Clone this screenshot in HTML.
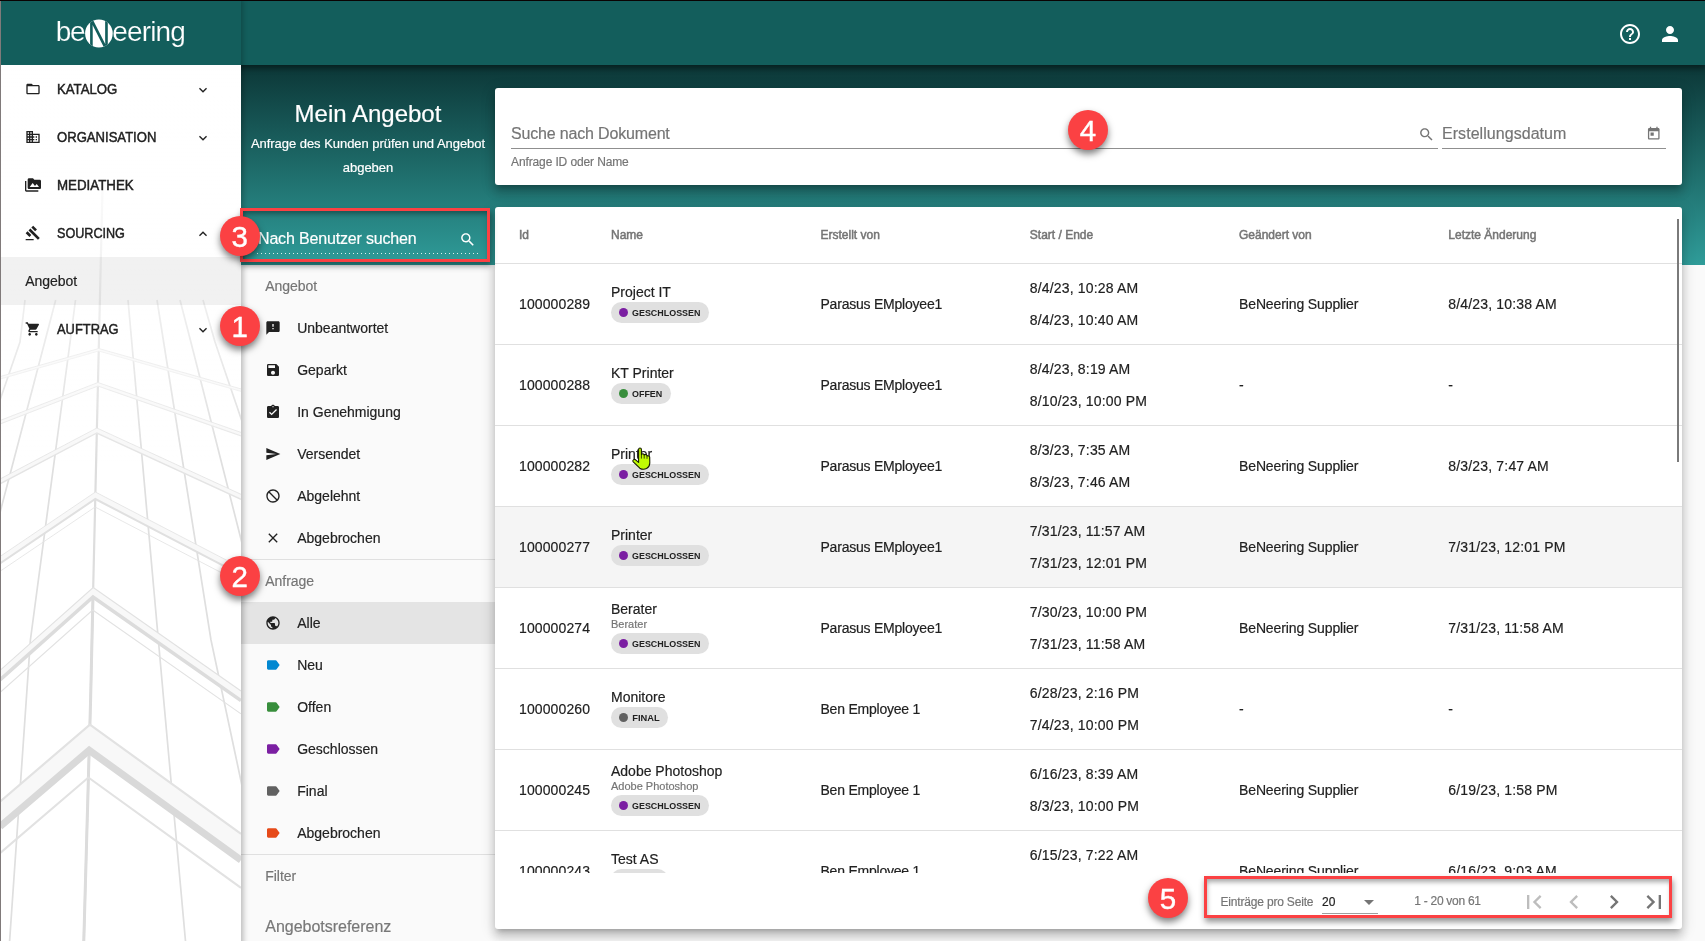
<!DOCTYPE html>
<html lang="de"><head><meta charset="utf-8"><title>Mein Angebot</title>
<style>
*{box-sizing:border-box}
html,body{margin:0;padding:0}
body{width:1705px;height:941px;overflow:hidden;position:relative;background:#fafafa;font-family:"Liberation Sans",sans-serif;color:#212121}
#root{position:absolute;left:0;top:0;width:1705px;height:941px;overflow:hidden;will-change:transform}
.t{position:absolute;white-space:nowrap;-webkit-text-stroke:.18px currentColor}
.ic{position:absolute;display:block}
.abs{position:absolute}
#grad{left:241px;top:65px;width:1464px;height:200px;background:linear-gradient(to bottom,#0c3737 0%,#2f9c99 100%)}
#hdr{left:0;top:0;width:1705px;height:65px;background:#135e5c;box-shadow:0 2px 6px 1px rgba(0,0,0,.45)}
#side{left:0;top:65px;width:241px;height:896px;background:#fff;box-shadow:2px 0 6px rgba(0,0,0,.28);overflow:hidden}
#mid{left:241px;top:265px;width:254px;height:676px;background:#fafafa}
.card{position:absolute;background:#fff;border-radius:3px;box-shadow:0 5px 5px -3px rgba(0,0,0,.2),0 8px 10px 1px rgba(0,0,0,.14),0 3px 14px 2px rgba(0,0,0,.12)}
.hl{position:absolute;height:1px;background:#e0e0e0}
.chip{position:absolute;height:21px;border-radius:10.5px;background:#e0e0e0}
.dot{position:absolute;width:9.6px;height:9.6px;border-radius:50%}
.num{position:absolute;width:40px;height:40px;border-radius:50%;background:#fb4143;color:#fff;font-size:29.5px;line-height:41px;text-align:center;-webkit-text-stroke:.4px #fff;box-shadow:0 4px 7px rgba(0,0,0,.5)}
.red{position:absolute;border:3px solid #fb4143;box-shadow:1px 4px 6px rgba(0,0,0,.42), inset 1px 4px 5px -1px rgba(0,0,0,.35)}
</style></head><body><div id="root">
<!-- bg -->
<div class="abs" id="grad"></div>
<div class="abs" id="mid"></div>
<!-- mid -->
<div class="t" style="left:241px;top:99px;width:254px;height:30px;line-height:30px;font-size:24px;color:#fff;text-align:center">Mein Angebot</div>
<div class="t" style="left:241px;top:131.5px;width:254px;line-height:24px;font-size:13px;color:#fff;text-align:center;white-space:normal;letter-spacing:-0.04px">Anfrage des Kunden prüfen und Angebot<br>abgeben</div>
<div class="t " style="left:258px;top:226.6px;height:24px;line-height:24px;font-size:16px;color:#fff;letter-spacing:-0.17px;">Nach Benutzer suchen</div>
<svg class="ic" style="left:458.6px;top:231.3px;width:17.3px;height:17.3px;" viewBox="0 0 24 24"><path fill="#fff" d="M15.5 14h-.79l-.28-.27C15.41 12.59 16 11.11 16 9.5 16 5.91 13.09 3 9.5 3S3 5.91 3 9.5 5.91 16 9.5 16c1.61 0 3.09-.59 4.23-1.57l.27.28v.79l5 4.99L20.49 19l-4.99-5zm-6 0C7.01 14 5 11.99 5 9.5S7.01 5 9.5 5 14 7.01 14 9.5 11.99 14 9.5 14z"/></svg>
<div class="abs" style="left:257px;top:253px;width:222px;height:1px;background:linear-gradient(to right,rgba(255,255,255,.85) 0,rgba(255,255,255,.85) 33%,transparent 0) repeat-x;background-size:4px 1px"></div>
<div class="t " style="left:265.3px;top:276.2px;height:20px;line-height:20px;font-size:14px;color:#757575;letter-spacing:-0.05px;">Angebot</div>
<svg class="ic" style="left:265px;top:320px;width:16px;height:16px;" viewBox="0 0 24 24"><path fill="#212121" d="M20 2H4c-1.1 0-1.99.9-1.99 2L2 22l4-4h14c1.1 0 2-.9 2-2V4c0-1.1-.9-2-2-2zm-7 12h-2v-2h2v2zm0-4h-2V6h2v4z"/></svg>
<div class="t " style="left:297.2px;top:318.0px;height:20px;line-height:20px;font-size:14px;color:#212121;">Unbeantwortet</div>
<svg class="ic" style="left:265px;top:362px;width:16px;height:16px;" viewBox="0 0 24 24"><path fill="#212121" d="M17 3H5c-1.11 0-2 .9-2 2v14c0 1.1.89 2 2 2h14c1.1 0 2-.9 2-2V7l-4-4zm-5 16c-1.66 0-3-1.34-3-3s1.34-3 3-3 3 1.34 3 3-1.34 3-3 3zm3-10H5V5h10v4z"/></svg>
<div class="t " style="left:297.2px;top:360.0px;height:20px;line-height:20px;font-size:14px;color:#212121;">Geparkt</div>
<svg class="ic" style="left:265px;top:404px;width:16px;height:16px;" viewBox="0 0 24 24"><path fill="#212121" d="M19 3h-4.18C14.4 1.84 13.3 1 12 1c-1.3 0-2.4.84-2.82 2H5c-1.1 0-2 .9-2 2v14c0 1.1.9 2 2 2h14c1.1 0 2-.9 2-2V5c0-1.1-.9-2-2-2zm-7 0c.55 0 1 .45 1 1s-.45 1-1 1-1-.45-1-1 .45-1 1-1zm-2 14l-4-4 1.41-1.41L10 14.17l6.59-6.59L18 9l-8 8z"/></svg>
<div class="t " style="left:297.2px;top:402.0px;height:20px;line-height:20px;font-size:14px;color:#212121;">In Genehmigung</div>
<svg class="ic" style="left:265px;top:446px;width:16px;height:16px;" viewBox="0 0 24 24"><path fill="#212121" d="M2.01 21L23 12 2.01 3 2 10l15 2-15 2z"/></svg>
<div class="t " style="left:297.2px;top:444.0px;height:20px;line-height:20px;font-size:14px;color:#212121;">Versendet</div>
<svg class="ic" style="left:265px;top:488px;width:16px;height:16px;" viewBox="0 0 24 24"><path fill="#212121" d="M12 2C6.48 2 2 6.48 2 12s4.48 10 10 10 10-4.48 10-10S17.52 2 12 2zm0 18c-4.42 0-8-3.58-8-8 0-1.85.63-3.55 1.69-4.9L16.9 18.31C15.55 19.37 13.85 20 12 20zm6.31-3.1L7.1 5.69C8.45 4.63 10.15 4 12 4c4.42 0 8 3.58 8 8 0 1.85-.63 3.55-1.69 4.9z"/></svg>
<div class="t " style="left:297.2px;top:486.0px;height:20px;line-height:20px;font-size:14px;color:#212121;">Abgelehnt</div>
<svg class="ic" style="left:265px;top:530px;width:16px;height:16px;" viewBox="0 0 24 24"><path fill="#212121" d="M19 6.41L17.59 5 12 10.59 6.41 5 5 6.41 10.59 12 5 17.59 6.41 19 12 13.41 17.59 19 19 17.59 13.41 12z"/></svg>
<div class="t " style="left:297.2px;top:528.0px;height:20px;line-height:20px;font-size:14px;color:#212121;">Abgebrochen</div>
<div class="hl" style="left:241px;top:559px;width:254px"></div>
<div class="t " style="left:265.3px;top:571.2px;height:20px;line-height:20px;font-size:14px;color:#757575;letter-spacing:-0.05px;">Anfrage</div>
<div class="abs" style="left:241px;top:602px;width:254px;height:42px;background:#e4e4e4"></div>
<svg class="ic" style="left:265px;top:615px;width:16px;height:16px;" viewBox="0 0 24 24"><path fill="#212121" d="M12 2C6.48 2 2 6.48 2 12s4.48 10 10 10 10-4.48 10-10S17.52 2 12 2zm-1 17.93c-3.95-.49-7-3.85-7-7.93 0-.62.08-1.21.21-1.79L9 15v1c0 1.1.9 2 2 2v1.93zm6.9-2.54c-.26-.81-1-1.39-1.9-1.39h-1v-3c0-.55-.45-1-1-1H8v-2h2c.55 0 1-.45 1-1V7h2c1.1 0 2-.9 2-2v-.41c2.93 1.19 5 4.06 5 7.41 0 2.08-.8 3.97-2.1 5.39z"/></svg>
<div class="t " style="left:297.2px;top:613.0px;height:20px;line-height:20px;font-size:14px;color:#212121;">Alle</div>
<svg class="ic" style="left:265px;top:657px;width:16px;height:16px;" viewBox="0 0 24 24"><path fill="#0288d1" d="M17.63 5.84C17.27 5.33 16.67 5 16 5L5 5.01C3.9 5.01 3 5.9 3 7v10c0 1.1.9 1.99 2 1.99L16 19c.67 0 1.27-.33 1.63-.84L22 12l-4.37-6.16z"/></svg>
<div class="t " style="left:297.2px;top:655.0px;height:20px;line-height:20px;font-size:14px;color:#212121;">Neu</div>
<svg class="ic" style="left:265px;top:699px;width:16px;height:16px;" viewBox="0 0 24 24"><path fill="#388e3c" d="M17.63 5.84C17.27 5.33 16.67 5 16 5L5 5.01C3.9 5.01 3 5.9 3 7v10c0 1.1.9 1.99 2 1.99L16 19c.67 0 1.27-.33 1.63-.84L22 12l-4.37-6.16z"/></svg>
<div class="t " style="left:297.2px;top:697.0px;height:20px;line-height:20px;font-size:14px;color:#212121;">Offen</div>
<svg class="ic" style="left:265px;top:741px;width:16px;height:16px;" viewBox="0 0 24 24"><path fill="#7b1fa2" d="M17.63 5.84C17.27 5.33 16.67 5 16 5L5 5.01C3.9 5.01 3 5.9 3 7v10c0 1.1.9 1.99 2 1.99L16 19c.67 0 1.27-.33 1.63-.84L22 12l-4.37-6.16z"/></svg>
<div class="t " style="left:297.2px;top:739.0px;height:20px;line-height:20px;font-size:14px;color:#212121;">Geschlossen</div>
<svg class="ic" style="left:265px;top:783px;width:16px;height:16px;" viewBox="0 0 24 24"><path fill="#616161" d="M17.63 5.84C17.27 5.33 16.67 5 16 5L5 5.01C3.9 5.01 3 5.9 3 7v10c0 1.1.9 1.99 2 1.99L16 19c.67 0 1.27-.33 1.63-.84L22 12l-4.37-6.16z"/></svg>
<div class="t " style="left:297.2px;top:781.0px;height:20px;line-height:20px;font-size:14px;color:#212121;">Final</div>
<svg class="ic" style="left:265px;top:825px;width:16px;height:16px;" viewBox="0 0 24 24"><path fill="#e64a19" d="M17.63 5.84C17.27 5.33 16.67 5 16 5L5 5.01C3.9 5.01 3 5.9 3 7v10c0 1.1.9 1.99 2 1.99L16 19c.67 0 1.27-.33 1.63-.84L22 12l-4.37-6.16z"/></svg>
<div class="t " style="left:297.2px;top:823.0px;height:20px;line-height:20px;font-size:14px;color:#212121;">Abgebrochen</div>
<div class="hl" style="left:241px;top:854px;width:254px"></div>
<div class="t " style="left:265.3px;top:866.2px;height:20px;line-height:20px;font-size:14px;color:#757575;letter-spacing:-0.05px;">Filter</div>
<div class="t " style="left:265.3px;top:915.0px;height:24px;line-height:24px;font-size:16px;color:#787878;letter-spacing:-0.02px;">Angebotsreferenz</div>
<!-- hdr -->
<div class="abs" id="hdr"></div>
<svg class="ic" style="left:1618px;top:22px;width:24px;height:24px;" viewBox="0 0 24 24"><path fill="#fff" d="M11 18h2v-2h-2v2zm1-16C6.48 2 2 6.48 2 12s4.48 10 10 10 10-4.48 10-10S17.52 2 12 2zm0 18c-4.41 0-8-3.59-8-8s3.59-8 8-8 8 3.59 8 8-3.59 8-8 8zm0-14c-2.21 0-4 1.79-4 4h2c0-1.1.9-2 2-2s2 .9 2 2c0 2-3 1.75-3 5h2c0-2.25 3-2.5 3-5 0-2.21-1.79-4-4-4z"/></svg>
<svg class="ic" style="left:1658px;top:22px;width:24px;height:24px;" viewBox="0 0 24 24"><path fill="#fff" d="M12 12c2.21 0 4-1.79 4-4s-1.79-4-4-4-4 1.79-4 4 1.79 4 4 4zm0 2c-2.67 0-8 1.34-8 4v2h16v-2c0-2.66-5.33-4-8-4z"/></svg>
<!-- cards -->
<div class="card" style="left:495px;top:88px;width:1187px;height:97px"></div>
<div class="card" id="tbl" style="left:495px;top:207px;width:1187px;height:721.7px"></div>
<div class="t " style="left:511px;top:121.5px;height:24px;line-height:24px;font-size:16px;color:#757575;letter-spacing:-0.17px;">Suche nach Dokument</div>
<div class="abs" style="left:511px;top:148px;width:927px;height:1px;background:#8f8f8f"></div>
<div class="t " style="left:511px;top:153.5px;height:16px;line-height:16px;font-size:12px;color:#757575;letter-spacing:-0.12px;">Anfrage ID oder Name</div>
<svg class="ic" style="left:1417.5px;top:125.5px;width:17px;height:17px;" viewBox="0 0 24 24"><path fill="#757575" d="M15.5 14h-.79l-.28-.27C15.41 12.59 16 11.11 16 9.5 16 5.91 13.09 3 9.5 3S3 5.91 3 9.5 5.91 16 9.5 16c1.61 0 3.09-.59 4.23-1.57l.27.28v.79l5 4.99L20.49 19l-4.99-5zm-6 0C7.01 14 5 11.99 5 9.5S7.01 5 9.5 5 14 7.01 14 9.5 11.99 14 9.5 14z"/></svg>
<div class="t " style="left:1442px;top:121.5px;height:24px;line-height:24px;font-size:16px;color:#757575;letter-spacing:0.05px;">Erstellungsdatum</div>
<div class="abs" style="left:1442px;top:148px;width:224px;height:1px;background:#8f8f8f"></div>
<svg class="ic" style="left:1646.2px;top:126px;width:15.5px;height:15.5px;" viewBox="0 0 24 24"><path fill="#757575" d="M19 3h-1V1h-2v2H8V1H6v2H5c-1.11 0-1.99.9-1.99 2L3 19c0 1.1.89 2 2 2h14c1.1 0 2-.9 2-2V5c0-1.1-.9-2-2-2zm0 16H5V8h14v11zM7 10h5v5H7z"/></svg>
<div class="t " style="left:519px;top:227.0px;height:16px;line-height:16px;font-size:12px;color:#757575;-webkit-text-stroke:.5px #757575;">Id</div>
<div class="t " style="left:611px;top:227.0px;height:16px;line-height:16px;font-size:12px;color:#757575;-webkit-text-stroke:.5px #757575;">Name</div>
<div class="t " style="left:820.5px;top:227.0px;height:16px;line-height:16px;font-size:12px;color:#757575;-webkit-text-stroke:.5px #757575;">Erstellt von</div>
<div class="t " style="left:1029.8px;top:227.0px;height:16px;line-height:16px;font-size:12px;color:#757575;-webkit-text-stroke:.5px #757575;">Start / Ende</div>
<div class="t " style="left:1239px;top:227.0px;height:16px;line-height:16px;font-size:12px;color:#757575;-webkit-text-stroke:.5px #757575;">Geändert von</div>
<div class="t " style="left:1448.3px;top:227.0px;height:16px;line-height:16px;font-size:12px;color:#757575;-webkit-text-stroke:.5px #757575;">Letzte Änderung</div>
<div class="hl" style="left:495px;top:263px;width:1187px"></div>
<div class="abs" style="left:495px;top:264px;width:1187px;height:609px;overflow:hidden">
<div class="hl" style="left:0;top:80px;width:1187px"></div>
<div class="t " style="left:24px;top:30.200000000000003px;height:20px;line-height:20px;font-size:14px;color:#212121;letter-spacing:0.12px;">100000289</div>
<div class="t " style="left:116px;top:18.200000000000003px;height:20px;line-height:20px;font-size:14px;color:#212121;">Project IT</div>
<div class="chip" style="left:116px;top:38.2px;width:97.6px"></div>
<div class="dot" style="left:123.6px;top:43.800000000000004px;background:#7b1fa2"></div>
<div class="t " style="left:137.3px;top:42.7px;height:12px;line-height:12px;font-size:9.3px;color:#212121;font-weight:700;transform:scaleX(0.96);transform-origin:0 50%;-webkit-text-stroke:0;">GESCHLOSSEN</div>
<div class="t " style="left:325.5px;top:30.200000000000003px;height:20px;line-height:20px;font-size:14px;color:#212121;letter-spacing:-0.22px;">Parasus EMployee1</div>
<div class="t " style="left:534.8px;top:14.200000000000003px;height:20px;line-height:20px;font-size:14px;color:#212121;letter-spacing:0.17px;">8/4/23, 10:28 AM</div>
<div class="t " style="left:534.8px;top:46.2px;height:20px;line-height:20px;font-size:14px;color:#212121;letter-spacing:0.17px;">8/4/23, 10:40 AM</div>
<div class="t " style="left:744px;top:30.200000000000003px;height:20px;line-height:20px;font-size:14px;color:#212121;letter-spacing:-0.12px;">BeNeering Supplier</div>
<div class="t " style="left:953.3px;top:30.200000000000003px;height:20px;line-height:20px;font-size:14px;color:#212121;letter-spacing:0.17px;">8/4/23, 10:38 AM</div>
<div class="hl" style="left:0;top:161px;width:1187px"></div>
<div class="t " style="left:24px;top:111.2px;height:20px;line-height:20px;font-size:14px;color:#212121;letter-spacing:0.12px;">100000288</div>
<div class="t " style="left:116px;top:99.2px;height:20px;line-height:20px;font-size:14px;color:#212121;">KT Printer</div>
<div class="chip" style="left:116px;top:119.2px;width:60px"></div>
<div class="dot" style="left:123.6px;top:124.8px;background:#388e3c"></div>
<div class="t " style="left:137.3px;top:123.69999999999999px;height:12px;line-height:12px;font-size:9.3px;color:#212121;font-weight:700;transform:scaleX(0.96);transform-origin:0 50%;-webkit-text-stroke:0;">OFFEN</div>
<div class="t " style="left:325.5px;top:111.2px;height:20px;line-height:20px;font-size:14px;color:#212121;letter-spacing:-0.22px;">Parasus EMployee1</div>
<div class="t " style="left:534.8px;top:95.2px;height:20px;line-height:20px;font-size:14px;color:#212121;letter-spacing:0.17px;">8/4/23, 8:19 AM</div>
<div class="t " style="left:534.8px;top:127.19999999999999px;height:20px;line-height:20px;font-size:14px;color:#212121;letter-spacing:0.17px;">8/10/23, 10:00 PM</div>
<div class="t " style="left:744px;top:111.2px;height:20px;line-height:20px;font-size:14px;color:#212121;letter-spacing:-0.12px;">-</div>
<div class="t " style="left:953.3px;top:111.2px;height:20px;line-height:20px;font-size:14px;color:#212121;letter-spacing:0.17px;">-</div>
<div class="hl" style="left:0;top:242px;width:1187px"></div>
<div class="t " style="left:24px;top:192.2px;height:20px;line-height:20px;font-size:14px;color:#212121;letter-spacing:0.12px;">100000282</div>
<div class="t " style="left:116px;top:180.2px;height:20px;line-height:20px;font-size:14px;color:#212121;">Printer</div>
<div class="chip" style="left:116px;top:200.2px;width:97.6px"></div>
<div class="dot" style="left:123.6px;top:205.79999999999998px;background:#7b1fa2"></div>
<div class="t " style="left:137.3px;top:204.7px;height:12px;line-height:12px;font-size:9.3px;color:#212121;font-weight:700;transform:scaleX(0.96);transform-origin:0 50%;-webkit-text-stroke:0;">GESCHLOSSEN</div>
<div class="t " style="left:325.5px;top:192.2px;height:20px;line-height:20px;font-size:14px;color:#212121;letter-spacing:-0.22px;">Parasus EMployee1</div>
<div class="t " style="left:534.8px;top:176.2px;height:20px;line-height:20px;font-size:14px;color:#212121;letter-spacing:0.17px;">8/3/23, 7:35 AM</div>
<div class="t " style="left:534.8px;top:208.2px;height:20px;line-height:20px;font-size:14px;color:#212121;letter-spacing:0.17px;">8/3/23, 7:46 AM</div>
<div class="t " style="left:744px;top:192.2px;height:20px;line-height:20px;font-size:14px;color:#212121;letter-spacing:-0.12px;">BeNeering Supplier</div>
<div class="t " style="left:953.3px;top:192.2px;height:20px;line-height:20px;font-size:14px;color:#212121;letter-spacing:0.17px;">8/3/23, 7:47 AM</div>
<div class="abs" style="left:0;top:243px;width:1187px;height:80px;background:#f5f5f5"></div>
<div class="hl" style="left:0;top:323px;width:1187px"></div>
<div class="t " style="left:24px;top:273.2px;height:20px;line-height:20px;font-size:14px;color:#212121;letter-spacing:0.12px;">100000277</div>
<div class="t " style="left:116px;top:261.2px;height:20px;line-height:20px;font-size:14px;color:#212121;">Printer</div>
<div class="chip" style="left:116px;top:281.2px;width:97.6px"></div>
<div class="dot" style="left:123.6px;top:286.8px;background:#7b1fa2"></div>
<div class="t " style="left:137.3px;top:285.7px;height:12px;line-height:12px;font-size:9.3px;color:#212121;font-weight:700;transform:scaleX(0.96);transform-origin:0 50%;-webkit-text-stroke:0;">GESCHLOSSEN</div>
<div class="t " style="left:325.5px;top:273.2px;height:20px;line-height:20px;font-size:14px;color:#212121;letter-spacing:-0.22px;">Parasus EMployee1</div>
<div class="t " style="left:534.8px;top:257.2px;height:20px;line-height:20px;font-size:14px;color:#212121;letter-spacing:0.17px;">7/31/23, 11:57 AM</div>
<div class="t " style="left:534.8px;top:289.2px;height:20px;line-height:20px;font-size:14px;color:#212121;letter-spacing:0.17px;">7/31/23, 12:01 PM</div>
<div class="t " style="left:744px;top:273.2px;height:20px;line-height:20px;font-size:14px;color:#212121;letter-spacing:-0.12px;">BeNeering Supplier</div>
<div class="t " style="left:953.3px;top:273.2px;height:20px;line-height:20px;font-size:14px;color:#212121;letter-spacing:0.17px;">7/31/23, 12:01 PM</div>
<div class="hl" style="left:0;top:404px;width:1187px"></div>
<div class="t " style="left:24px;top:354.2px;height:20px;line-height:20px;font-size:14px;color:#212121;letter-spacing:0.12px;">100000274</div>
<div class="t " style="left:116px;top:334.7px;height:20px;line-height:20px;font-size:14px;color:#212121;">Berater</div>
<div class="t " style="left:116px;top:352.9px;height:14px;line-height:14px;font-size:11px;color:#757575;">Berater</div>
<div class="chip" style="left:116px;top:369.0px;width:97.6px"></div>
<div class="dot" style="left:123.6px;top:374.6px;background:#7b1fa2"></div>
<div class="t " style="left:137.3px;top:373.5px;height:12px;line-height:12px;font-size:9.3px;color:#212121;font-weight:700;transform:scaleX(0.96);transform-origin:0 50%;-webkit-text-stroke:0;">GESCHLOSSEN</div>
<div class="t " style="left:325.5px;top:354.2px;height:20px;line-height:20px;font-size:14px;color:#212121;letter-spacing:-0.22px;">Parasus EMployee1</div>
<div class="t " style="left:534.8px;top:338.2px;height:20px;line-height:20px;font-size:14px;color:#212121;letter-spacing:0.17px;">7/30/23, 10:00 PM</div>
<div class="t " style="left:534.8px;top:370.2px;height:20px;line-height:20px;font-size:14px;color:#212121;letter-spacing:0.17px;">7/31/23, 11:58 AM</div>
<div class="t " style="left:744px;top:354.2px;height:20px;line-height:20px;font-size:14px;color:#212121;letter-spacing:-0.12px;">BeNeering Supplier</div>
<div class="t " style="left:953.3px;top:354.2px;height:20px;line-height:20px;font-size:14px;color:#212121;letter-spacing:0.17px;">7/31/23, 11:58 AM</div>
<div class="hl" style="left:0;top:485px;width:1187px"></div>
<div class="t " style="left:24px;top:435.2px;height:20px;line-height:20px;font-size:14px;color:#212121;letter-spacing:0.12px;">100000260</div>
<div class="t " style="left:116px;top:423.2px;height:20px;line-height:20px;font-size:14px;color:#212121;">Monitore</div>
<div class="chip" style="left:116px;top:443.2px;width:57px"></div>
<div class="dot" style="left:123.6px;top:448.8px;background:#616161"></div>
<div class="t " style="left:137.3px;top:447.7px;height:12px;line-height:12px;font-size:9.3px;color:#212121;font-weight:700;-webkit-text-stroke:0;">FINAL</div>
<div class="t " style="left:325.5px;top:435.2px;height:20px;line-height:20px;font-size:14px;color:#212121;letter-spacing:-0.22px;">Ben Employee 1</div>
<div class="t " style="left:534.8px;top:419.2px;height:20px;line-height:20px;font-size:14px;color:#212121;letter-spacing:0.17px;">6/28/23, 2:16 PM</div>
<div class="t " style="left:534.8px;top:451.2px;height:20px;line-height:20px;font-size:14px;color:#212121;letter-spacing:0.17px;">7/4/23, 10:00 PM</div>
<div class="t " style="left:744px;top:435.2px;height:20px;line-height:20px;font-size:14px;color:#212121;letter-spacing:-0.12px;">-</div>
<div class="t " style="left:953.3px;top:435.2px;height:20px;line-height:20px;font-size:14px;color:#212121;letter-spacing:0.17px;">-</div>
<div class="hl" style="left:0;top:566px;width:1187px"></div>
<div class="t " style="left:24px;top:516.2px;height:20px;line-height:20px;font-size:14px;color:#212121;letter-spacing:0.12px;">100000245</div>
<div class="t " style="left:116px;top:496.70000000000005px;height:20px;line-height:20px;font-size:14px;color:#212121;">Adobe Photoshop</div>
<div class="t " style="left:116px;top:514.9000000000001px;height:14px;line-height:14px;font-size:11px;color:#757575;">Adobe Photoshop</div>
<div class="chip" style="left:116px;top:531.0px;width:97.6px"></div>
<div class="dot" style="left:123.6px;top:536.6px;background:#7b1fa2"></div>
<div class="t " style="left:137.3px;top:535.5px;height:12px;line-height:12px;font-size:9.3px;color:#212121;font-weight:700;transform:scaleX(0.96);transform-origin:0 50%;-webkit-text-stroke:0;">GESCHLOSSEN</div>
<div class="t " style="left:325.5px;top:516.2px;height:20px;line-height:20px;font-size:14px;color:#212121;letter-spacing:-0.22px;">Ben Employee 1</div>
<div class="t " style="left:534.8px;top:500.20000000000005px;height:20px;line-height:20px;font-size:14px;color:#212121;letter-spacing:0.17px;">6/16/23, 8:39 AM</div>
<div class="t " style="left:534.8px;top:532.2px;height:20px;line-height:20px;font-size:14px;color:#212121;letter-spacing:0.17px;">8/3/23, 10:00 PM</div>
<div class="t " style="left:744px;top:516.2px;height:20px;line-height:20px;font-size:14px;color:#212121;letter-spacing:-0.12px;">BeNeering Supplier</div>
<div class="t " style="left:953.3px;top:516.2px;height:20px;line-height:20px;font-size:14px;color:#212121;letter-spacing:0.17px;">6/19/23, 1:58 PM</div>
<div class="hl" style="left:0;top:647px;width:1187px"></div>
<div class="t " style="left:24px;top:597.2px;height:20px;line-height:20px;font-size:14px;color:#212121;letter-spacing:0.12px;">100000243</div>
<div class="t " style="left:116px;top:585.2px;height:20px;line-height:20px;font-size:14px;color:#212121;">Test AS</div>
<div class="chip" style="left:116px;top:605.2px;width:57px"></div>
<div class="dot" style="left:123.6px;top:610.8000000000001px;background:#616161"></div>
<div class="t " style="left:137.3px;top:609.7px;height:12px;line-height:12px;font-size:9.3px;color:#212121;font-weight:700;-webkit-text-stroke:0;">FINAL</div>
<div class="t " style="left:325.5px;top:597.2px;height:20px;line-height:20px;font-size:14px;color:#212121;letter-spacing:-0.22px;">Ben Employee 1</div>
<div class="t " style="left:534.8px;top:581.2px;height:20px;line-height:20px;font-size:14px;color:#212121;letter-spacing:0.17px;">6/15/23, 7:22 AM</div>
<div class="t " style="left:534.8px;top:613.2px;height:20px;line-height:20px;font-size:14px;color:#212121;letter-spacing:0.17px;">6/16/23, 9:03 AM</div>
<div class="t " style="left:744px;top:597.2px;height:20px;line-height:20px;font-size:14px;color:#212121;letter-spacing:-0.12px;">BeNeering Supplier</div>
<div class="t " style="left:953.3px;top:597.2px;height:20px;line-height:20px;font-size:14px;color:#212121;letter-spacing:0.17px;">6/16/23, 9:03 AM</div>
</div>
<div class="abs" style="left:1677px;top:219px;width:2px;height:243px;background:#7a7a7a"></div>
<div class="t " style="left:1220.5px;top:893.6px;height:16px;line-height:16px;font-size:12px;color:#757575;letter-spacing:-0.18px;">Einträge pro Seite</div>
<div class="t " style="left:1322px;top:893.8px;height:16px;line-height:16px;font-size:12px;color:#212121;">20</div>
<svg class="ic" style="left:1357px;top:889.5px;width:24px;height:24px;" viewBox="0 0 24 24"><path fill="#757575" d="M7 10l5 5 5-5z"/></svg>
<div class="abs" style="left:1322px;top:913px;width:56px;height:1px;background:#9e9e9e"></div>
<div class="t " style="left:1414.3px;top:892.5px;height:16px;line-height:16px;font-size:12px;color:#757575;letter-spacing:-0.28px;">1 - 20 von 61</div>
<svg class="ic" style="left:1520px;top:888px;width:28px;height:28px;" viewBox="0 0 24 24"><path fill="#bdbdbd" d="M18.41 16.59L13.82 12l4.59-4.59L17 6l-6 6 6 6zM6 6h2v12H6z"/></svg>
<svg class="ic" style="left:1560px;top:888px;width:28px;height:28px;" viewBox="0 0 24 24"><path fill="#bdbdbd" d="M15.41 7.41L14 6l-6 6 6 6 1.41-1.41L10.83 12z"/></svg>
<svg class="ic" style="left:1600px;top:888px;width:28px;height:28px;" viewBox="0 0 24 24"><path fill="#757575" d="M10 6L8.59 7.41 13.17 12l-4.58 4.59L10 18l6-6z"/></svg>
<svg class="ic" style="left:1640px;top:888px;width:28px;height:28px;" viewBox="0 0 24 24"><path fill="#757575" d="M5.59 7.41L10.18 12l-4.59 4.59L7 18l6-6-6-6zM16 6h2v12h-2z"/></svg>
<!-- side -->
<div class="abs" id="side">
<svg class="abs" style="left:0;top:0;filter:blur(.55px)" width="241" height="876" viewBox="0 65 241 876" fill="none"><defs><linearGradient id="fade" x1="0" y1="0" x2="0" y2="1"><stop offset="0" stop-color="#fff" stop-opacity="1"/><stop offset=".3" stop-color="#fff" stop-opacity=".88"/><stop offset="1" stop-color="#fff" stop-opacity="0"/></linearGradient></defs><g stroke="#dfdfdf" stroke-width="1.7" stroke-linejoin="round"><path d="M25.0 300.0L20.0 342.0L0.0 400.0"/><path d="M55.7 300.0L44.6 342.5L0.0 512.6"/><path d="M75.5 300.0L70.0 342.5L30.4 640.0L9.6 941.0"/><path d="M128.0 300.0L131.8 342.5L163.7 700.0L185.5 941.0"/><path d="M157.0 300.0L163.7 342.5L211.0 640.0L245.0 800.0"/><path d="M180.0 300.0L191.0 342.5L245.0 555.0"/><path d="M203.0 300.0L215.0 342.0L245.0 430.0"/></g><path d="M102.7 180.0L99.9 300.0L93.1 592.0L90.6 700.0L83.8 941.0" stroke="#dddddd" stroke-width="2.2"/><path d="M92.9 600.0L90.6 700.0L83.8 941.0" stroke="#dcdcdc" stroke-width="3"/><path d="M0 376.6L98.8 348.5L241 388.9V391.4L98.7 351.0L0 379.1Z" fill="#f8f8f8"/><path d="M0 379.1L98.7 351.0L241 391.4" stroke="#ebebeb" stroke-width="0.9"/><path d="M0 376.6L98.8 348.5L241 388.9" stroke="#e2e2e2" stroke-width="0.8"/><path d="M0 420.5L98.0 382.5L241 432.4V435.9L97.9 386.0L0 424.0Z" fill="#f8f8f8"/><path d="M0 424.0L97.9 386.0L241 435.9" stroke="#e8e8e8" stroke-width="1.1"/><path d="M0 420.5L98.0 382.5L241 432.4" stroke="#e2e2e2" stroke-width="0.8"/><path d="M0 479.0L96.9 428.0L241 494.3V499.3L96.8 433.0L0 483.9Z" fill="#f8f8f8"/><path d="M0 483.9L96.8 433.0L241 499.3" stroke="#e4e4e4" stroke-width="1.4"/><path d="M0 479.0L96.9 428.0L241 494.3" stroke="#e2e2e2" stroke-width="0.8"/><path d="M0 556.5L95.4 492.0L241 567.7V574.8L95.3 499.0L0 563.4Z" fill="#f8f8f8"/><path d="M0 563.4L95.3 499.0L241 574.8" stroke="#e0e0e0" stroke-width="2"/><path d="M0 556.5L95.4 492.0L241 567.7" stroke="#e2e2e2" stroke-width="0.8"/><path d="M0 571.3L95.1 507.0L241 582.9" stroke="#e2e2e2" stroke-width="0.8"/><path d="M0 670.4L93.2 587.5L241 691.0V700.6L93.0 597.0L0 679.8Z" fill="#f8f8f8"/><path d="M0 679.8L93.0 597.0L241 700.6" stroke="#dcdcdc" stroke-width="3.6"/><path d="M0 670.4L93.2 587.5L241 691.0" stroke="#e2e2e2" stroke-width="1.1"/><path d="M0 692.5L92.7 610.0L241 713.8" stroke="#e2e2e2" stroke-width="1.1"/><path d="M0 801.6L89.9 724.7L241 833.9V860.1L89.2 750.3L0 826.6Z" fill="#f8f8f8"/><path d="M0 826.6L89.2 750.3L241 860.1" stroke="#d9d9d9" stroke-width="7"/><path d="M0 801.6L89.9 724.7L241 833.9" stroke="#e2e2e2" stroke-width="2.1"/><path d="M0 853.1L88.4 777.5L241 887.8" stroke="#e2e2e2" stroke-width="2.1"/><rect x="0" y="65" width="241" height="400" fill="url(#fade)"/></svg>
</div>
<div class="abs" style="left:0;top:0;width:241px;height:65px;background:#135e5c;box-shadow:2px 0 5px rgba(0,0,0,.22);clip-path:inset(0 -10px 0 0)"></div>
<div class="t " style="left:55.7px;top:15.5px;height:32px;line-height:32px;font-size:28px;color:#fff;letter-spacing:-1.2px;-webkit-text-stroke:.2px #135e5c;">be</div>
<div class="t " style="left:112.3px;top:15.5px;height:32px;line-height:32px;font-size:28px;color:#fff;letter-spacing:-0.85px;-webkit-text-stroke:.2px #135e5c;">eering</div>
<svg class="abs" style="left:85px;top:18.5px" width="28" height="29" viewBox="0 0 28 29">
<defs><clipPath id="cc"><ellipse cx="13.9" cy="14.5" rx="13.8" ry="14.1"/></clipPath></defs>
<ellipse cx="13.9" cy="14.5" rx="13.8" ry="14.1" fill="#fff"/>
<g clip-path="url(#cc)"><text x="13.9" y="28.7" text-anchor="middle" font-family="Liberation Sans, sans-serif" font-size="39.6" fill="#135e5c" transform="translate(13.9 0) scale(.8 1) translate(-13.9 0)">N</text></g>
</svg>
<svg class="ic" style="left:25px;top:81px;width:16px;height:16px;" viewBox="0 0 24 24"><path fill="#212121" d="M20 6h-8l-2-2H4c-1.1 0-1.99.9-1.99 2L2 18c0 1.1.9 2 2 2h16c1.1 0 2-.9 2-2V8c0-1.1-.9-2-2-2zm0 12H4V8h16v10z"/></svg>
<div class="t " style="left:57.3px;top:79.0px;height:20px;line-height:20px;font-size:14px;color:#212121;transform:scaleX(0.942);transform-origin:0 50%;-webkit-text-stroke:.45px #212121;">KATALOG</div>
<svg class="ic" style="left:195px;top:82px;width:16px;height:16px;" viewBox="0 0 24 24"><path fill="#212121" d="M16.59 8.59L12 13.17 7.41 8.59 6 10l6 6 6-6z"/></svg>
<svg class="ic" style="left:25px;top:129px;width:16px;height:16px;" viewBox="0 0 24 24"><path fill="#212121" d="M12 7V3H2v18h20V7H12zM6 19H4v-2h2v2zm0-4H4v-2h2v2zm0-4H4V9h2v2zm0-4H4V5h2v2zm4 12H8v-2h2v2zm0-4H8v-2h2v2zm0-4H8V9h2v2zm0-4H8V5h2v2zm10 12h-8v-2h2v-2h-2v-2h2v-2h-2V9h8v10zm-2-8h-2v2h2v-2zm0 4h-2v2h2v-2z"/></svg>
<div class="t " style="left:57.3px;top:127.0px;height:20px;line-height:20px;font-size:14px;color:#212121;transform:scaleX(0.935);transform-origin:0 50%;-webkit-text-stroke:.45px #212121;">ORGANISATION</div>
<svg class="ic" style="left:195px;top:130px;width:16px;height:16px;" viewBox="0 0 24 24"><path fill="#212121" d="M16.59 8.59L12 13.17 7.41 8.59 6 10l6 6 6-6z"/></svg>
<svg class="ic" style="left:25px;top:177px;width:16px;height:16px;" viewBox="0 0 24 24"><path fill="#212121" d="M2 6H0v5h.01L0 20c0 1.1.9 2 2 2h18v-2H2V6zm20-2h-8l-2-2H6c-1.1 0-1.99.9-1.99 2L4 16c0 1.1.9 2 2 2h16c1.1 0 2-.9 2-2V6c0-1.1-.9-2-2-2zM7 15l4.5-6 3.5 4.51 2.5-3.01L21 15H7z"/></svg>
<div class="t " style="left:57.3px;top:175.0px;height:20px;line-height:20px;font-size:14px;color:#212121;transform:scaleX(0.951);transform-origin:0 50%;-webkit-text-stroke:.45px #212121;">MEDIATHEK</div>
<svg class="ic" style="left:25px;top:225px;width:16px;height:16px;" viewBox="0 0 24 24"><path fill="#212121" d="M1 21h12v2H1zM5.245 8.07l2.83-2.827 14.14 14.142-2.828 2.828zM12.317 1l5.657 5.656-2.83 2.83-5.654-5.66zM3.825 9.485l5.657 5.657-2.828 2.828-5.657-5.657z"/></svg>
<div class="t " style="left:57.3px;top:223.0px;height:20px;line-height:20px;font-size:14px;color:#212121;transform:scaleX(0.9);transform-origin:0 50%;-webkit-text-stroke:.45px #212121;">SOURCING</div>
<svg class="ic" style="left:195px;top:226px;width:16px;height:16px;" viewBox="0 0 24 24"><path fill="#212121" d="M12 8l-6 6 1.41 1.41L12 10.83l4.59 4.58L18 14z"/></svg>
<div class="abs" style="left:0;top:257px;width:241px;height:48px;background:rgba(0,0,0,.055)"></div>
<div class="t " style="left:25.3px;top:271.2px;height:20px;line-height:20px;font-size:14px;color:#212121;letter-spacing:-0.05px;">Angebot</div>
<svg class="ic" style="left:25px;top:321px;width:16px;height:16px;" viewBox="0 0 24 24"><path fill="#212121" d="M7 18c-1.1 0-1.99.9-1.99 2S5.9 22 7 22s2-.9 2-2-.9-2-2-2zM1 2v2h2l3.6 7.59-1.35 2.45c-.16.28-.25.61-.25.96 0 1.1.9 2 2 2h12v-2H7.42c-.14 0-.25-.11-.25-.25l.03-.12.9-1.63h7.45c.75 0 1.41-.41 1.75-1.03l3.58-6.49c.08-.14.12-.31.12-.48 0-.55-.45-1-1-1H5.21l-.94-2H1zm16 16c-1.1 0-1.99.9-1.99 2s.89 2 1.99 2 2-.9 2-2-.9-2-2-2z"/></svg>
<div class="t " style="left:57.3px;top:319.0px;height:20px;line-height:20px;font-size:14px;color:#212121;transform:scaleX(0.92);transform-origin:0 50%;-webkit-text-stroke:.45px #212121;">AUFTRAG</div>
<svg class="ic" style="left:195px;top:322px;width:16px;height:16px;" viewBox="0 0 24 24"><path fill="#212121" d="M16.59 8.59L12 13.17 7.41 8.59 6 10l6 6 6-6z"/></svg>
<!-- anno -->
<div class="red" style="left:240px;top:208px;width:250px;height:54px"></div>
<div class="red" style="left:1204px;top:876px;width:468px;height:42px"></div>
<div class="num" style="left:219.8px;top:306px">1</div>
<div class="num" style="left:219.6px;top:556.1px">2</div>
<div class="num" style="left:219.6px;top:215.8px">3</div>
<div class="num" style="left:1068px;top:110px">4</div>
<div class="num" style="left:1148px;top:877.8px">5</div>
<svg class="abs" style="left:628px;top:444px" width="26" height="28" viewBox="628 444 26 28">
<path d="M638.6 462.4L638.6 449.4Q638.6 448 640 448Q641.4 448 641.4 449.4L641.4 454.6Q642.7 452.9 644 454.4L644.2 455Q645.6 453.8 646.9 455.4L647 456Q648.6 455.2 649.7 457L649.8 463Q649.6 467 646.5 468.6Q643 470.2 639.8 468.2L633 461.6Q632.4 460.4 633.6 459.6Q634.6 459 635.6 459.8Z" fill="#c0fb04" stroke="#161a00" stroke-width="1.1" stroke-linejoin="round"/>
<path d="M641.4 454.6V458.6M644.2 455V458.6M647 456V458.8" stroke="#2a3300" stroke-width=".9" fill="none"/>
</svg>
<!-- frame -->
<div class="abs" style="left:0;top:0;width:1px;height:941px;background:#807a7a"></div>
<div class="abs" style="left:0;top:0;width:1705px;height:1px;background:#0a0202"></div>
</div></body></html>
